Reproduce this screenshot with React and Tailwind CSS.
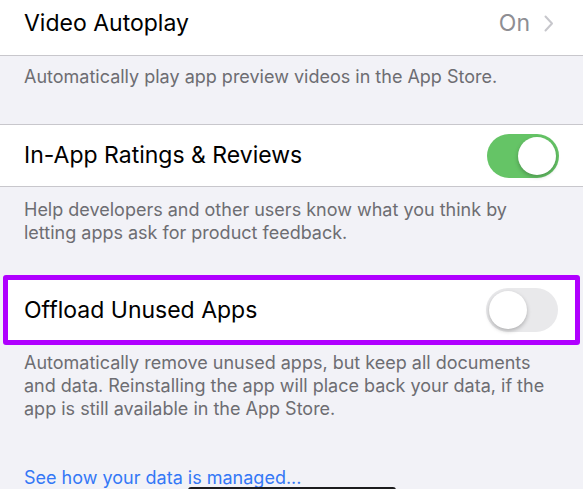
export default function App() {
  const font = { fontFamily: "Inter, 'Noto Sans', sans-serif" };
  return (
    <div className="w-[583px] h-[489px] overflow-hidden bg-[#f2f2f7] relative" style={font}>
      {/* Video Autoplay */}
      <div className="h-[56px] bg-white border-b border-[#c8c7cc] flex items-center justify-between pl-[24px] pr-[29px] pb-[8px]">
        <span className="text-[23px] text-black">Video Autoplay</span>
        <div className="flex items-center gap-[14px]">
          <span className="text-[23px] text-[#8e8e93]">On</span>
          <svg width="10" height="17" viewBox="0 0 10 17" fill="none">
            <path d="M1.5 1.5 L8 8.5 L1.5 15.5" stroke="#c7c7cc" strokeWidth="2" strokeLinecap="round" strokeLinejoin="round" />
          </svg>
        </div>
      </div>
      <div className="h-[68px] pl-[24px] pt-[9px] text-[18px] leading-[23px] text-[#6d6d72]">
        Automatically play app preview videos in the App Store.
      </div>

      {/* In-App Ratings */}
      <div className="h-[63px] bg-white border-y border-[#c8c7cc] flex items-center justify-between pl-[24px] pr-[24px]">
        <span className="text-[23px] text-black">In-App Ratings &amp; Reviews</span>
        <div className="w-[72px] h-[44px] rounded-full bg-[#65c466] p-[3px] flex justify-end">
          <div className="w-[38px] h-[38px] rounded-full bg-white shadow-[0_2px_4px_rgba(0,0,0,0.25)]" />
        </div>
      </div>
      <div className="h-[88px] pl-[24px] pr-[30px] pt-[11px] text-[18px] leading-[23px] text-[#6d6d72]">
        Help developers and other users know what you think by letting apps ask for product feedback.
      </div>

      {/* Offload Unused Apps */}
      <div className="mx-[3px] h-[70px] bg-white border-[5px] border-[#b000ff] rounded-[3px] flex items-center justify-between pl-[16px] pr-[17px]">
        <span className="text-[23px] text-black">Offload Unused Apps</span>
        <div className="w-[72px] h-[44px] rounded-full bg-[#e9e9eb] p-[3px] flex justify-start">
          <div className="w-[38px] h-[38px] rounded-full bg-white shadow-[0_2px_4px_rgba(0,0,0,0.25)]" />
        </div>
      </div>
      <div className="pl-[24px] pr-[20px] pt-[6px] text-[18px] leading-[23px] text-[#6d6d72]">
        Automatically remove unused apps, but keep all documents and data. Reinstalling the app will place back your data, if the app is still available in the App Store.
      </div>

      <div className="pl-[24px] pt-[46px] text-[18px] leading-[23px] text-[#3478f6]">
        See how your data is managed...
      </div>

      <div className="absolute left-[188px] bottom-[-4px] w-[208px] h-[6px] rounded-full bg-[#1c1c1e]" />
    </div>
  );
}
